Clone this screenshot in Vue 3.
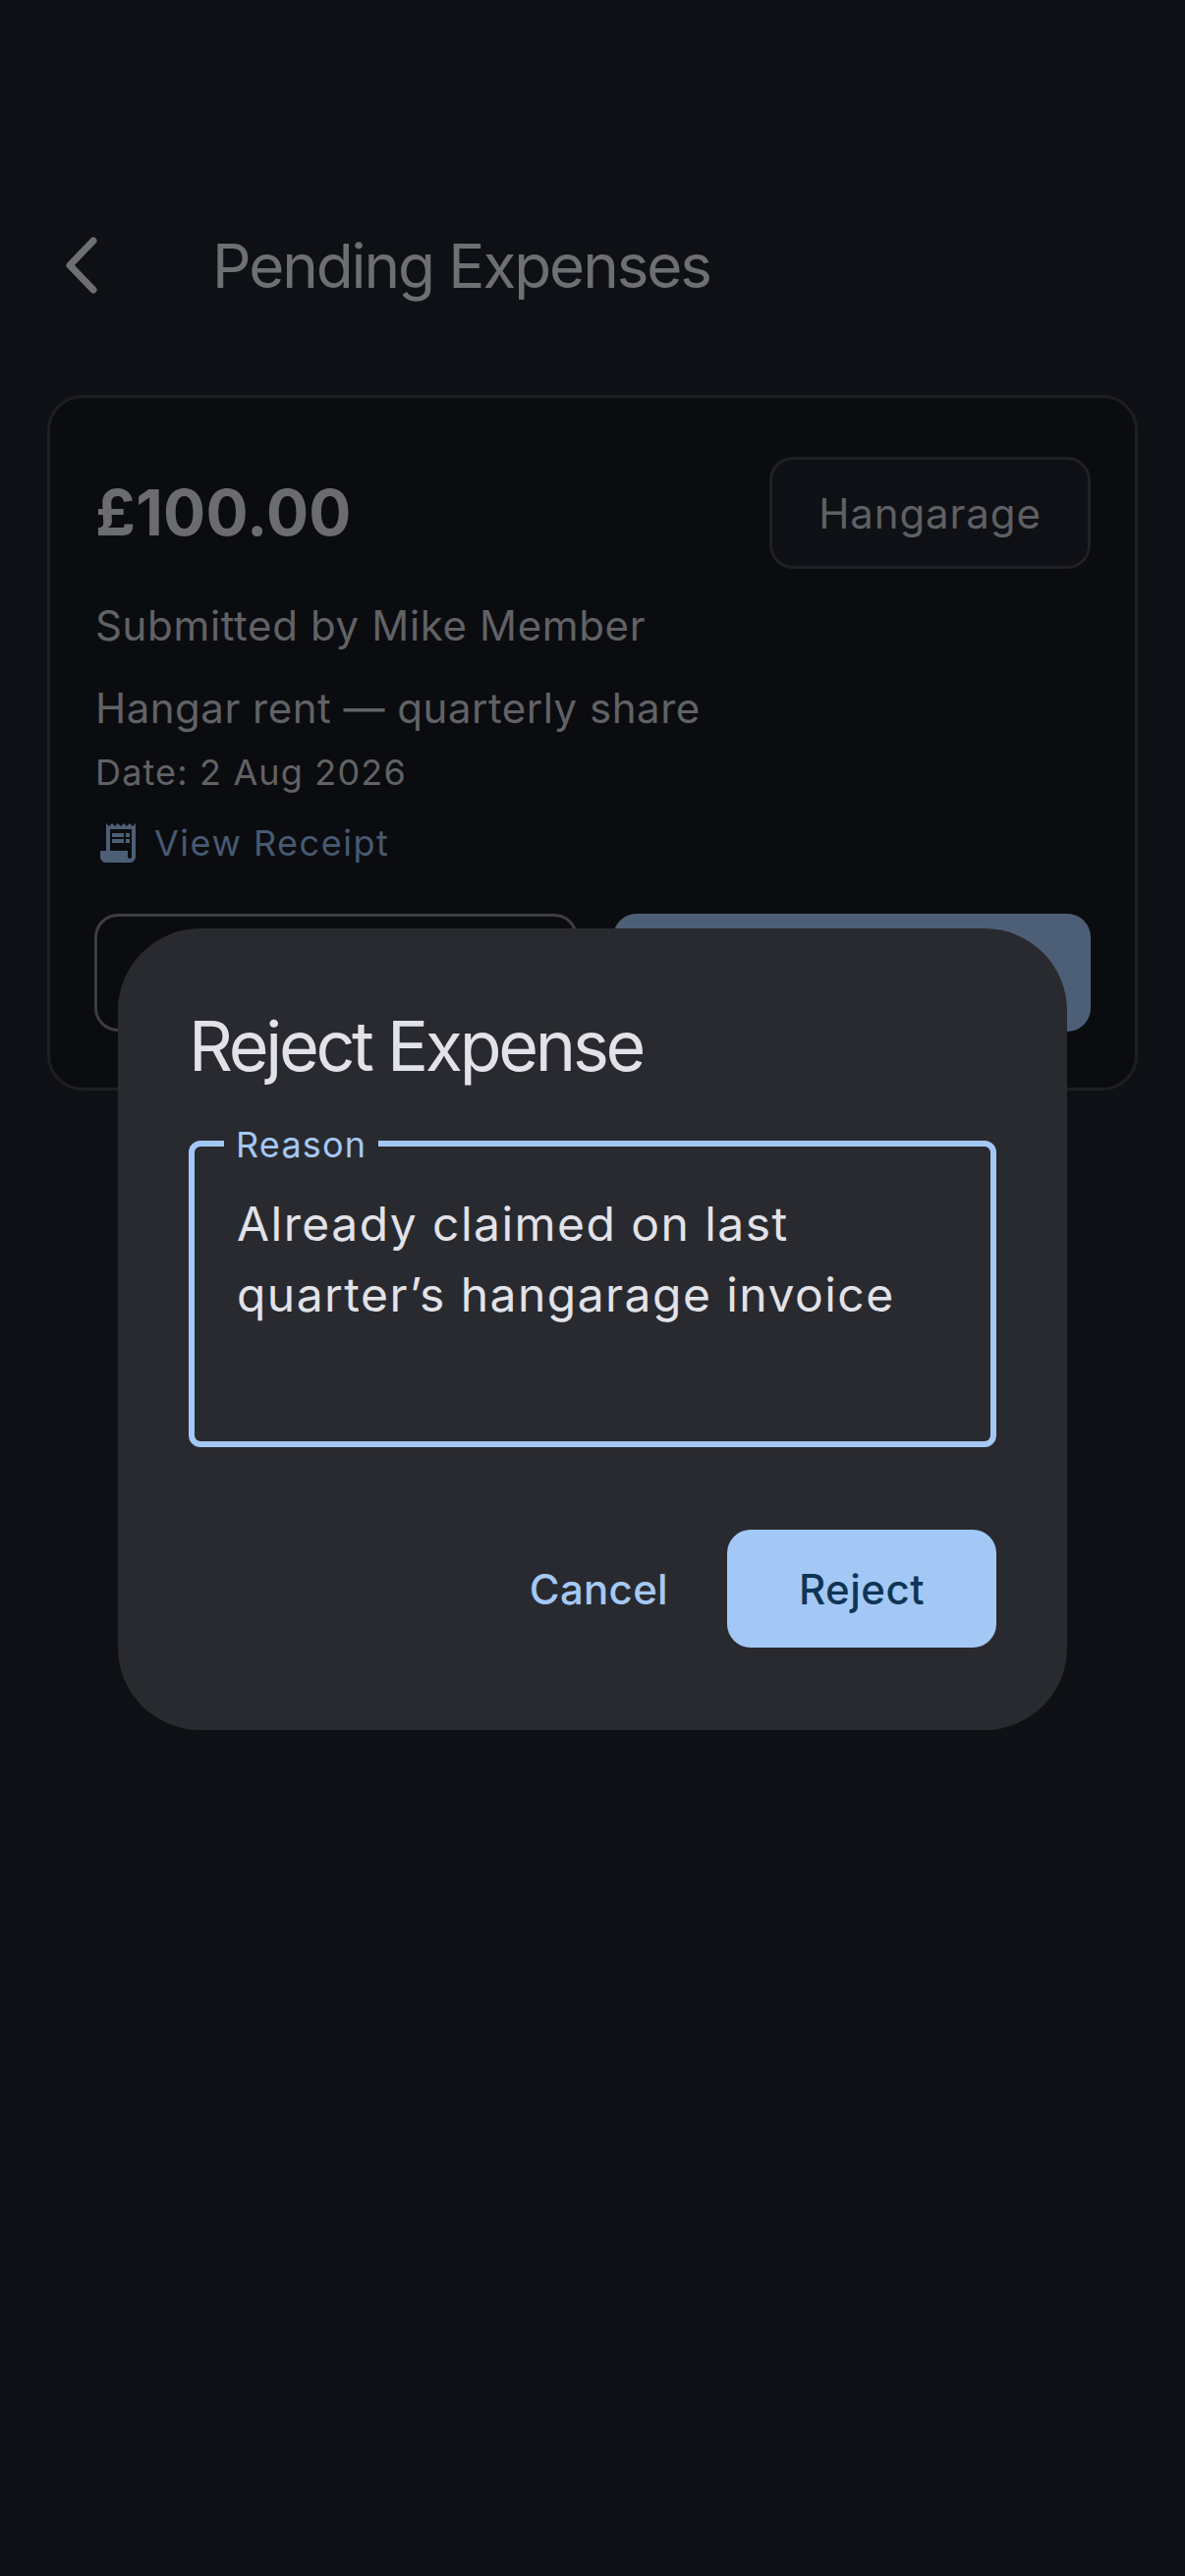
<template>
  <div class="screen">
    <header class="top-bar">
      <svg class="back" viewBox="0 0 48 72" aria-hidden="true">
        <path d="M37 11 L13 36 L37 61" />
      </svg>
      <h1 class="page-title">Pending Expenses</h1>
    </header>

    <section class="card">
      <div class="card-head">
        <div class="amount">£100.00</div>
        <div class="chip">Hangarage</div>
      </div>
      <p class="submitted">Submitted by Mike Member</p>
      <p class="desc">Hangar rent — quarterly share</p>
      <p class="date">Date: 2 Aug 2026</p>
      <div class="receipt">
        <svg class="receipt-icon" viewBox="0 0 24 24" aria-hidden="true">
          <path d="M19.5 3.5 18 2l-1.5 1.5L15 2l-1.5 1.5L12 2l-1.5 1.5L9 2 7.5 3.5 6 2v14H3v3c0 1.66 1.34 3 3 3h12c1.66 0 3-1.34 3-3V2l-1.5 1.5zM19 19c0 .55-.45 1-1 1s-1-.45-1-1v-3H8V5h11v14z" />
          <path d="M9 7h6v2H9zm7 0h2v2h-2zm-7 3h6v2H9zm7 0h2v2h-2z" />
        </svg>
        <span>View Receipt</span>
      </div>
      <div class="card-actions">
        <div class="action outline"></div>
        <div class="action filled"></div>
      </div>
    </section>

    <div class="dialog">
      <h2 class="dialog-title">Reject Expense</h2>
      <div class="field">
        <span class="field-label">Reason</span>
        <div class="field-text">Already claimed on last<br />quarter’s hangarage invoice</div>
      </div>
      <div class="dialog-actions">
        <div class="text-btn">Cancel</div>
        <div class="primary-btn">Reject</div>
      </div>
    </div>
  </div>
</template>

<script setup>
</script>

<style>
body { margin: 0; background: #0e1015; }
</style>

<style scoped>
.screen {
  position: relative;
  width: 1206px;
  height: 2622px;
  background: #0e1015;
  font-family: Inter, "Noto Sans", sans-serif;
  overflow: hidden;
  padding-top: 222px;
  box-sizing: border-box;
}
.top-bar {
  display: flex;
  align-items: center;
  height: 96px;
  padding-left: 58px;
}
.back {
  width: 48px;
  height: 72px;
  fill: none;
  stroke: #6e6f73;
  stroke-width: 7;
  stroke-linecap: round;
  stroke-linejoin: round;
  flex: none;
}
.page-title {
  margin: 2px 0 0 110px;
  font-size: 62px;
  font-weight: 400;
  line-height: 96px;
  letter-spacing: -2.1px;
  color: #6e6f73;
}
.card {
  margin: 84px 48px 0;
  height: 708px;
  box-sizing: border-box;
  padding: 60px 45px 0;
  background: #0b0c0f;
  border: 3px solid #1e1f23;
  border-radius: 36px;
}
.card-head {
  display: flex;
  justify-content: space-between;
  align-items: center;
}
.amount {
  margin-left: 1px;
  font-size: 64px;
  font-weight: 700;
  line-height: 112px;
  letter-spacing: 0.3px;
  color: #6b6c70;
}
.chip {
  height: 114px;
  box-sizing: border-box;
  width: 327px;
  display: flex;
  align-items: center;
  justify-content: center;
  border: 3px solid #202126;
  border-radius: 24px;
  background: #0e1015;
  font-size: 42px;
  font-weight: 400;
  letter-spacing: 0.9px;
  color: #5f6063;
}
.submitted,
.desc,
.date {
  margin: 0;
  margin-left: 1px;
  color: #616266;
}
.submitted {
  margin-top: 28px;
  font-size: 42px;
  line-height: 60px;
  letter-spacing: 0.65px;
}
.desc {
  margin-top: 24px;
  font-size: 42px;
  line-height: 60px;
  letter-spacing: 0.5px;
}
.date {
  margin-top: 11px;
  font-size: 36px;
  line-height: 48px;
  letter-spacing: 1.15px;
}
.receipt {
  display: flex;
  align-items: center;
  gap: 13px;
  margin-top: 24px;
  font-size: 36px;
  line-height: 48px;
  font-weight: 400;
  letter-spacing: 1.5px;
  color: #475a72;
}
.receipt-icon {
  width: 48px;
  height: 48px;
  fill: #4d5f76;
  flex: none;
}
.card-actions {
  display: flex;
  gap: 36px;
  margin-top: 48px;
}
.action {
  flex: 1;
  height: 120px;
  box-sizing: border-box;
  border-radius: 24px;
}
.outline { border: 3px solid #3c3d41; }
.filled { background: #4d5f76; }

.dialog {
  position: absolute;
  left: 120px;
  top: 945px;
  width: 966px;
  height: 816px;
  box-sizing: border-box;
  padding: 72px 72px 84px;
  background: #292a2f;
  border-radius: 84px;
}
.dialog-title {
  margin: 0;
  font-size: 70px;
  font-weight: 400;
  line-height: 96px;
  letter-spacing: -3.3px;
  color: #e2e2e9;
}
.field {
  position: relative;
  margin-top: 48px;
  height: 312px;
  box-sizing: border-box;
  padding: 48px 42px;
  border: 6px solid #a4c8f5;
  border-radius: 12px;
}
.field-label {
  position: absolute;
  left: 30px;
  top: -23px;
  padding: 0 12px;
  background: #292a2f;
  font-size: 36px;
  line-height: 42px;
  letter-spacing: 1.2px;
  color: #a4c8f5;
}
.field-text {
  margin-top: -5px;
  margin-left: 1px;
  font-size: 48px;
  line-height: 72px;
  letter-spacing: 1.45px;
  color: #e2e2e9;
}
.dialog-actions {
  display: flex;
  justify-content: flex-end;
  align-items: center;
  gap: 24px;
  margin-top: 84px;
}
.text-btn {
  padding: 0 36px;
  font-size: 42px;
  font-weight: 450;
  letter-spacing: 0.3px;
  color: #a4c8f5;
}
.primary-btn {
  width: 274px;
  height: 120px;
  display: flex;
  align-items: center;
  justify-content: center;
  border-radius: 24px;
  background: #a4c8f5;
  font-size: 42px;
  font-weight: 450;
  letter-spacing: 0.5px;
  color: #0f3556;
}
</style>
